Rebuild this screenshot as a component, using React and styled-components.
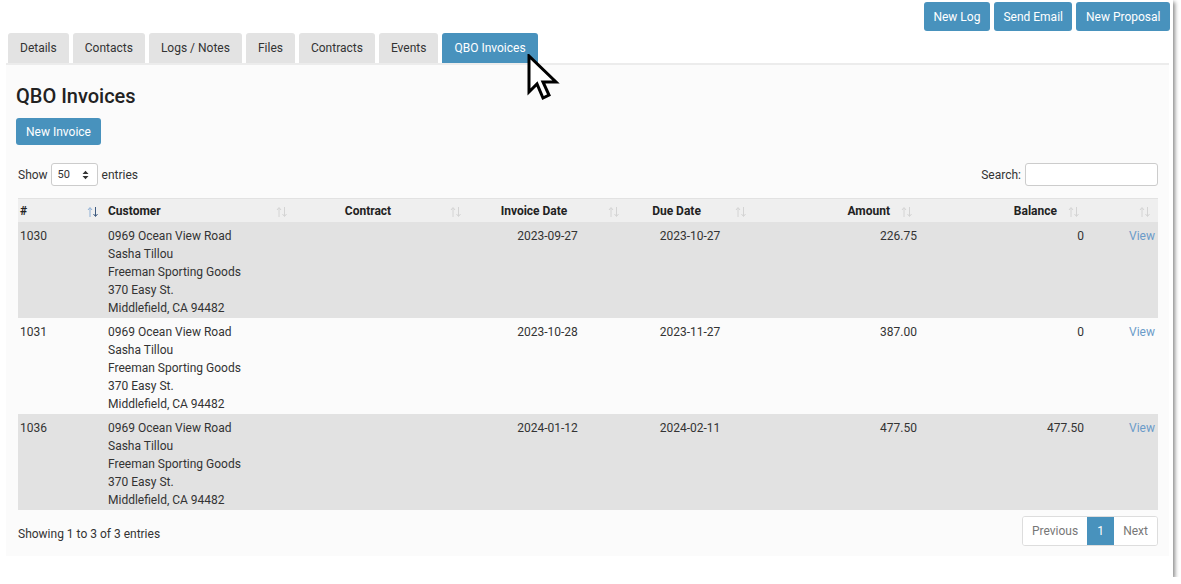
import styled, { createGlobalStyle } from 'styled-components';

const GlobalStyle = createGlobalStyle`
  html, body {
    margin: 0;
    padding: 0;
    background: #ffffff;
  }
  body {
    font-family: Roboto, "Liberation Sans", Arial, sans-serif;
    font-size: 12px;
    color: #333333;
  }
`;

const BLUE = '#4892bd';

const Frame = styled.div`
  position: relative;
  width: 1173px;
  height: 577px;
  background: #ffffff;
  box-shadow: 2px 2px 4px rgba(0, 0, 0, 0.45);
  box-sizing: border-box;
  padding: 2px 3px 0 6px;
`;

const TopActions = styled.div`
  display: flex;
  justify-content: flex-end;
  gap: 4px;
  height: 29px;
`;

const Button = styled.button`
  height: ${(p) => p.$h || 29}px;
  padding: 0 ${(p) => p.$px || 9.5}px;
  border: none;
  border-radius: 3px;
  background: ${BLUE};
  color: #ffffff;
  font-family: inherit;
  font-size: 12px;
  cursor: pointer;
`;

const TabBar = styled.div`
  display: flex;
  gap: 4px;
  padding-left: 2px;
  margin: 2px 1px 0 0;
  border-bottom: 2px solid #ececec;
`;

const Tab = styled.div`
  height: 30px;
  padding: 0 12px;
  display: flex;
  align-items: center;
  border-radius: 3px 3px 0 0;
  background: ${(p) => (p.$active ? BLUE : '#e3e3e3')};
  color: ${(p) => (p.$active ? '#ffffff' : '#333333')};
  font-size: 12px;
`;

const Panel = styled.div`
  background: #fbfbfb;
  height: 491px;
  margin-right: 1px;
  padding: 18px 11px 0 10px;
  box-sizing: border-box;
`;

const Heading = styled.h2`
  margin: 0 0 9px;
  font-size: 20px;
  font-weight: 500;
  color: #222222;
  line-height: 26px;
`;

const Controls = styled.div`
  display: flex;
  justify-content: space-between;
  align-items: center;
  margin: 18px 0 12px 2px;
`;

const Label = styled.label`
  display: flex;
  align-items: center;
  gap: 4px;
  color: #333333;
`;

const SelectBox = styled.div`
  width: 47px;
  height: 23px;
  margin-left: -1px;
  box-sizing: border-box;
  border: 1px solid #cccccc;
  border-radius: 3px;
  background: #ffffff;
  display: flex;
  align-items: center;
  justify-content: space-between;
  padding: 0 8px 0 6px;
  font-size: 11px;
`;

const SearchInput = styled.input`
  width: 133px;
  height: 23px;
  box-sizing: border-box;
  border: 1px solid #cccccc;
  border-radius: 3px;
  background: #ffffff;
`;

const Table = styled.table`
  width: 1140px;
  margin-left: 2px;
  border-collapse: collapse;
  table-layout: fixed;
`;

const Th = styled.th`
  position: relative;
  height: 23px;
  padding: 0 30px 0 2px;
  background: #efefef;
  border-top: 1px solid #e2e2e2;
  font-weight: 700;
  font-size: 12px;
  color: #222222;
  text-align: ${(p) => p.$align || 'left'};
`;

const SortIcon = styled.svg`
  position: absolute;
  right: 7px;
  top: 7px;
`;

const Row = styled.tr`
  background: ${(p) => (p.$odd ? '#e2e2e2' : '#fbfbfb')};
`;

const Td = styled.td`
  padding: 5px 3px 1px 2px;
  vertical-align: top;
  line-height: 18px;
  font-size: 12px;
  color: #333333;
  text-align: ${(p) => p.$align || 'left'};
`;

const Link = styled.a`
  color: #6b9bc9;
  text-decoration: none;
`;

const Footer = styled.div`
  display: flex;
  justify-content: space-between;
  align-items: center;
  margin: 6px 0 0 2px;
`;

const Pager = styled.div`
  display: flex;
  border: 1px solid #dddddd;
  border-radius: 3px;
  overflow: hidden;
  height: 28px;
  background: #ffffff;
`;

const PageItem = styled.div`
  display: flex;
  align-items: center;
  padding: 0 ${(p) => (p.$active ? 10 : 9)}px;
  min-width: ${(p) => (p.$active ? 7 : 0)}px;
  justify-content: center;
  background: ${(p) => (p.$active ? BLUE : '#ffffff')};
  color: ${(p) => (p.$active ? '#ffffff' : '#777777')};
  font-size: 12px;
`;

const ShowingText = styled.span`
  padding-top: 5px;
`;

const Cursor = styled.svg`
  position: absolute;
  left: 526px;
  top: 54px;
`;

const columns = [
  { key: 'num', title: '#', width: 88, align: 'left', active: true },
  { key: 'customer', title: 'Customer', width: 189, align: 'left' },
  { key: 'contract', title: 'Contract', width: 174, align: 'center' },
  { key: 'invoiceDate', title: 'Invoice Date', width: 158, align: 'center' },
  { key: 'dueDate', title: 'Due Date', width: 127, align: 'center' },
  { key: 'amount', title: 'Amount', width: 166, align: 'right' },
  { key: 'balance', title: 'Balance', width: 167, align: 'right' },
  { key: 'view', title: '', width: 71, align: 'right' },
];

const address = [
  '0969 Ocean View Road',
  'Sasha Tillou',
  'Freeman Sporting Goods',
  '370 Easy St.',
  'Middlefield, CA 94482',
];

const rows = [
  { num: '1030', invoiceDate: '2023-09-27', dueDate: '2023-10-27', amount: '226.75', balance: '0' },
  { num: '1031', invoiceDate: '2023-10-28', dueDate: '2023-11-27', amount: '387.00', balance: '0' },
  { num: '1036', invoiceDate: '2024-01-12', dueDate: '2024-02-11', amount: '477.50', balance: '477.50' },
];

function Sort({ active }) {
  const up = active ? '#8fb0d6' : '#d4d4d4';
  const down = active ? '#3d5a80' : '#d4d4d4';
  return (
    <SortIcon width="12" height="12" viewBox="0 0 12 12">
      <path d="M3 11V2M1 4l2-2.5L5 4" stroke={up} strokeWidth="1" fill="none" />
      <path d="M8.5 1v9M6.5 8l2 2.5 2-2.5" stroke={down} strokeWidth="1" fill="none" />
    </SortIcon>
  );
}

function App() {
  return (
    <>
      <GlobalStyle />
      <Frame>
        <TopActions>
          <Button>New Log</Button>
          <Button>Send Email</Button>
          <Button>New Proposal</Button>
        </TopActions>
        <TabBar>
          {['Details', 'Contacts', 'Logs / Notes', 'Files', 'Contracts', 'Events', 'QBO Invoices'].map((t) => (
            <Tab key={t} $active={t === 'QBO Invoices'}>{t}</Tab>
          ))}
        </TabBar>
        <Panel>
          <Heading>QBO Invoices</Heading>
          <Button $h={27} $px={10}>New Invoice</Button>
          <Controls>
            <Label>
              Show
              <SelectBox>
                <span>50</span>
                <svg width="7" height="10" viewBox="0 0 7 10">
                  <path d="M0.5 4L3.5 0.8 6.5 4z M0.5 6L3.5 9.2 6.5 6z" fill="#333" />
                </svg>
              </SelectBox>
              entries
            </Label>
            <Label>
              Search:
              <SearchInput />
            </Label>
          </Controls>
          <Table>
            <colgroup>
              {columns.map((c) => (
                <col key={c.key} style={{ width: c.width }} />
              ))}
            </colgroup>
            <thead>
              <tr>
                {columns.map((c) => (
                  <Th key={c.key} $align={c.align}>
                    {c.title}
                    <Sort active={c.active} />
                  </Th>
                ))}
              </tr>
            </thead>
            <tbody>
              {rows.map((r, i) => (
                <Row key={r.num} $odd={i % 2 === 0}>
                  <Td>{r.num}</Td>
                  <Td>
                    {address.map((line) => (
                      <div key={line}>{line}</div>
                    ))}
                  </Td>
                  <Td $align="center"></Td>
                  <Td $align="center">{r.invoiceDate}</Td>
                  <Td $align="center">{r.dueDate}</Td>
                  <Td $align="right">{r.amount}</Td>
                  <Td $align="right">{r.balance}</Td>
                  <Td $align="right"><Link href="#">View</Link></Td>
                </Row>
              ))}
            </tbody>
          </Table>
          <Footer>
            <ShowingText>Showing 1 to 3 of 3 entries</ShowingText>
            <Pager>
              <PageItem>Previous</PageItem>
              <PageItem $active>1</PageItem>
              <PageItem>Next</PageItem>
            </Pager>
          </Footer>
        </Panel>
        <Cursor width="38" height="50" viewBox="0 0 38 50">
          <path
            d="M3 2 L3 38 L11 30 L17 44 L23 41 L17 28 L30 28 Z"
            fill="#ffffff"
            stroke="#000000"
            strokeWidth="3"
            strokeLinejoin="miter"
          />
        </Cursor>
      </Frame>
    </>
  );
}

export default App;
